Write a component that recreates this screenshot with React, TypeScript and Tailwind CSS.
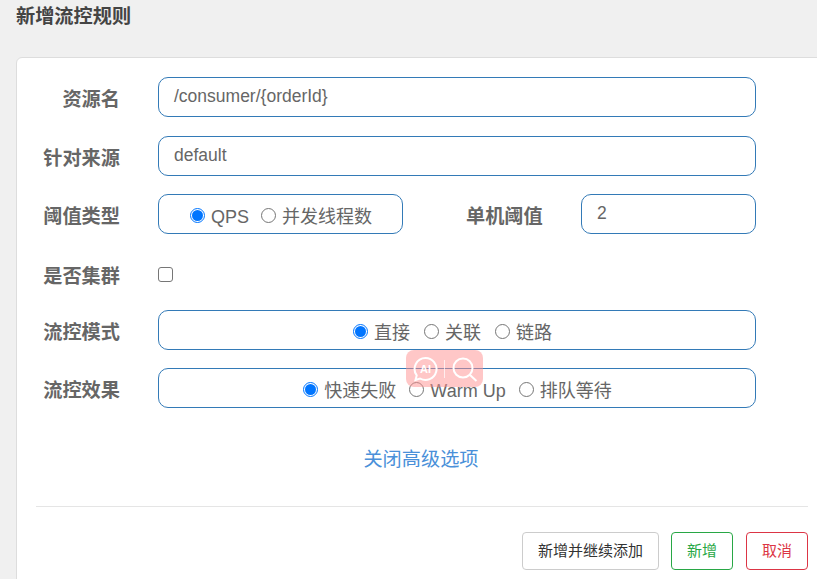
const font = "font-['Liberation_Sans','Noto_Sans_CJK_SC',sans-serif]";

function Radio({ checked, label }: { checked?: boolean; label: string }) {
  return (
    <label className="flex items-center">
      <span
        className={
          checked
            ? "mb-[3px] flex h-[15px] w-[15px] items-center justify-center rounded-full border border-[#0075ff] bg-white"
            : "mb-[3px] h-[15px] w-[15px] rounded-full border border-[#767676] bg-white"
        }
      >
        {checked && <span className="h-[11px] w-[11px] rounded-full bg-[#0075ff]" />}
      </span>
      <span className="ml-[6px] text-[18px] leading-[20px] text-[#666]">{label}</span>
    </label>
  );
}

function Label({ children }: { children: string }) {
  return <div className="w-[84px] whitespace-nowrap pt-[6px] text-right text-[19.2px] font-bold leading-[24px] text-[#666]">{children}</div>;
}

function TextBox({ value }: { value: string }) {
  return (
    <div className="ml-[38px] flex h-[40px] w-[598px] items-center rounded-[10px] border border-[#337ab7] pb-[2px] pl-[15px] text-[17.5px] text-[#666]">
      {value}
    </div>
  );
}

export default function App() {
  return (
    <div className={`relative h-[579px] w-[817px] overflow-hidden bg-[#f0f0f0] ${font}`}>
      <h1 className="pl-[16px] pt-[6px] text-[19.2px] font-bold leading-[22px] text-[#444]">新增流控规则</h1>

      {/* Card runs off the right and bottom of the window */}
      <div className="ml-[16px] mt-[29px] h-[540px] w-[820px] rounded-tl-[6px] border border-[#ddd] bg-white pl-[19px] pt-[19px]">
        <div className="flex h-[40px] items-center">
          <Label>资源名</Label>
          <TextBox value="/consumer/{orderId}" />
        </div>

        <div className="mt-[19px] flex h-[40px] items-center">
          <Label>针对来源</Label>
          <TextBox value="default" />
        </div>

        <div className="mt-[18px] flex h-[40px] items-center">
          <Label>阈值类型</Label>
          <div className="ml-[38px] flex h-[40px] w-[245px] items-center justify-center gap-[12px] rounded-[10px] border border-[#337ab7] pl-[1px] pt-[5px]">
            <Radio checked label="QPS" />
            <Radio label="并发线程数" />
          </div>
          <div className="ml-[63px] w-[78px] whitespace-nowrap pt-[6px] text-[19.2px] font-bold leading-[24px] text-[#666]">单机阈值</div>
          <div className="ml-[37px] flex h-[40px] w-[175px] items-center rounded-[10px] border border-[#337ab7] pb-[1px] pl-[15px] text-[17.5px] text-[#666]">
            2
          </div>
        </div>

        <div className="mt-[21px] flex h-[40px] items-center">
          <div className="-mt-[2px]">
            <Label>是否集群</Label>
          </div>
          <span className="mb-[2px] ml-[38px] h-[15px] w-[15px] rounded-[3px] border border-[#767676] bg-white" />
        </div>

        <div className="mt-[15px] flex h-[40px] items-center">
          <Label>流控模式</Label>
          <div className="ml-[38px] flex h-[40px] w-[598px] items-center justify-center gap-[14px] rounded-[10px] border border-[#337ab7] pr-[9px] pt-[5px]">
            <Radio checked label="直接" />
            <Radio label="关联" />
            <Radio label="链路" />
          </div>
        </div>

        <div className="mt-[18px] flex h-[40px] items-center">
          <Label>流控效果</Label>
          <div className="ml-[38px] flex h-[40px] w-[598px] items-center justify-center gap-[13px] rounded-[10px] border border-[#337ab7] pl-[1px] pt-[5px]">
            <Radio checked label="快速失败" />
            <Radio label="Warm Up" />
            <Radio label="排队等待" />
          </div>
        </div>

        <div className="mt-[40px] w-[770px] text-center text-[19.2px] leading-[24px] text-[#4a90d9]">关闭高级选项</div>

        <div className="mt-[34px] w-[772px] border-t border-[#e5e5e5]" />

        <div className="mt-[25px] flex w-[772px] justify-end">
          <button className="h-[38px] w-[137px] rounded-[4px] border border-[#ccc] bg-white text-[15px] text-[#333]">
            新增并继续添加
          </button>
          <button className="ml-[12px] h-[38px] w-[62px] rounded-[4px] border border-[#28a745] bg-white text-[15px] text-[#28a745]">
            新增
          </button>
          <button className="ml-[13px] h-[38px] w-[62px] rounded-[4px] border border-[#dc3545] bg-white text-[15px] text-[#dc3545]">
            取消
          </button>
        </div>
      </div>

      {/* Browser extension overlay floating over the form */}
      <div className="absolute left-[406px] top-[350px] flex h-[37px] w-[77px] items-center rounded-[8px] bg-[#ff9090]/50 pl-[7px]">
        <svg width="26" height="26" viewBox="0 0 26 26" fill="none" stroke="#fff" strokeWidth="2">
          <path d="M12.5 2a11 11 0 1 1-5.5 20.5L2.5 24l1.2-4.6A11 11 0 0 1 12.5 2z" />
          <text x="12.5" y="17" textAnchor="middle" fontSize="11" fontWeight="700" fill="#fff" stroke="none">
            AI
          </text>
        </svg>
        <span className="ml-[5px] h-[18px] w-px bg-white/70" />
        <svg className="ml-[7px]" width="28" height="28" viewBox="0 0 28 28" fill="none" stroke="#fff" strokeWidth="2">
          <circle cx="11" cy="13" r="9.5" />
          <path d="M18 20l6.5 6" />
        </svg>
      </div>
    </div>
  );
}
